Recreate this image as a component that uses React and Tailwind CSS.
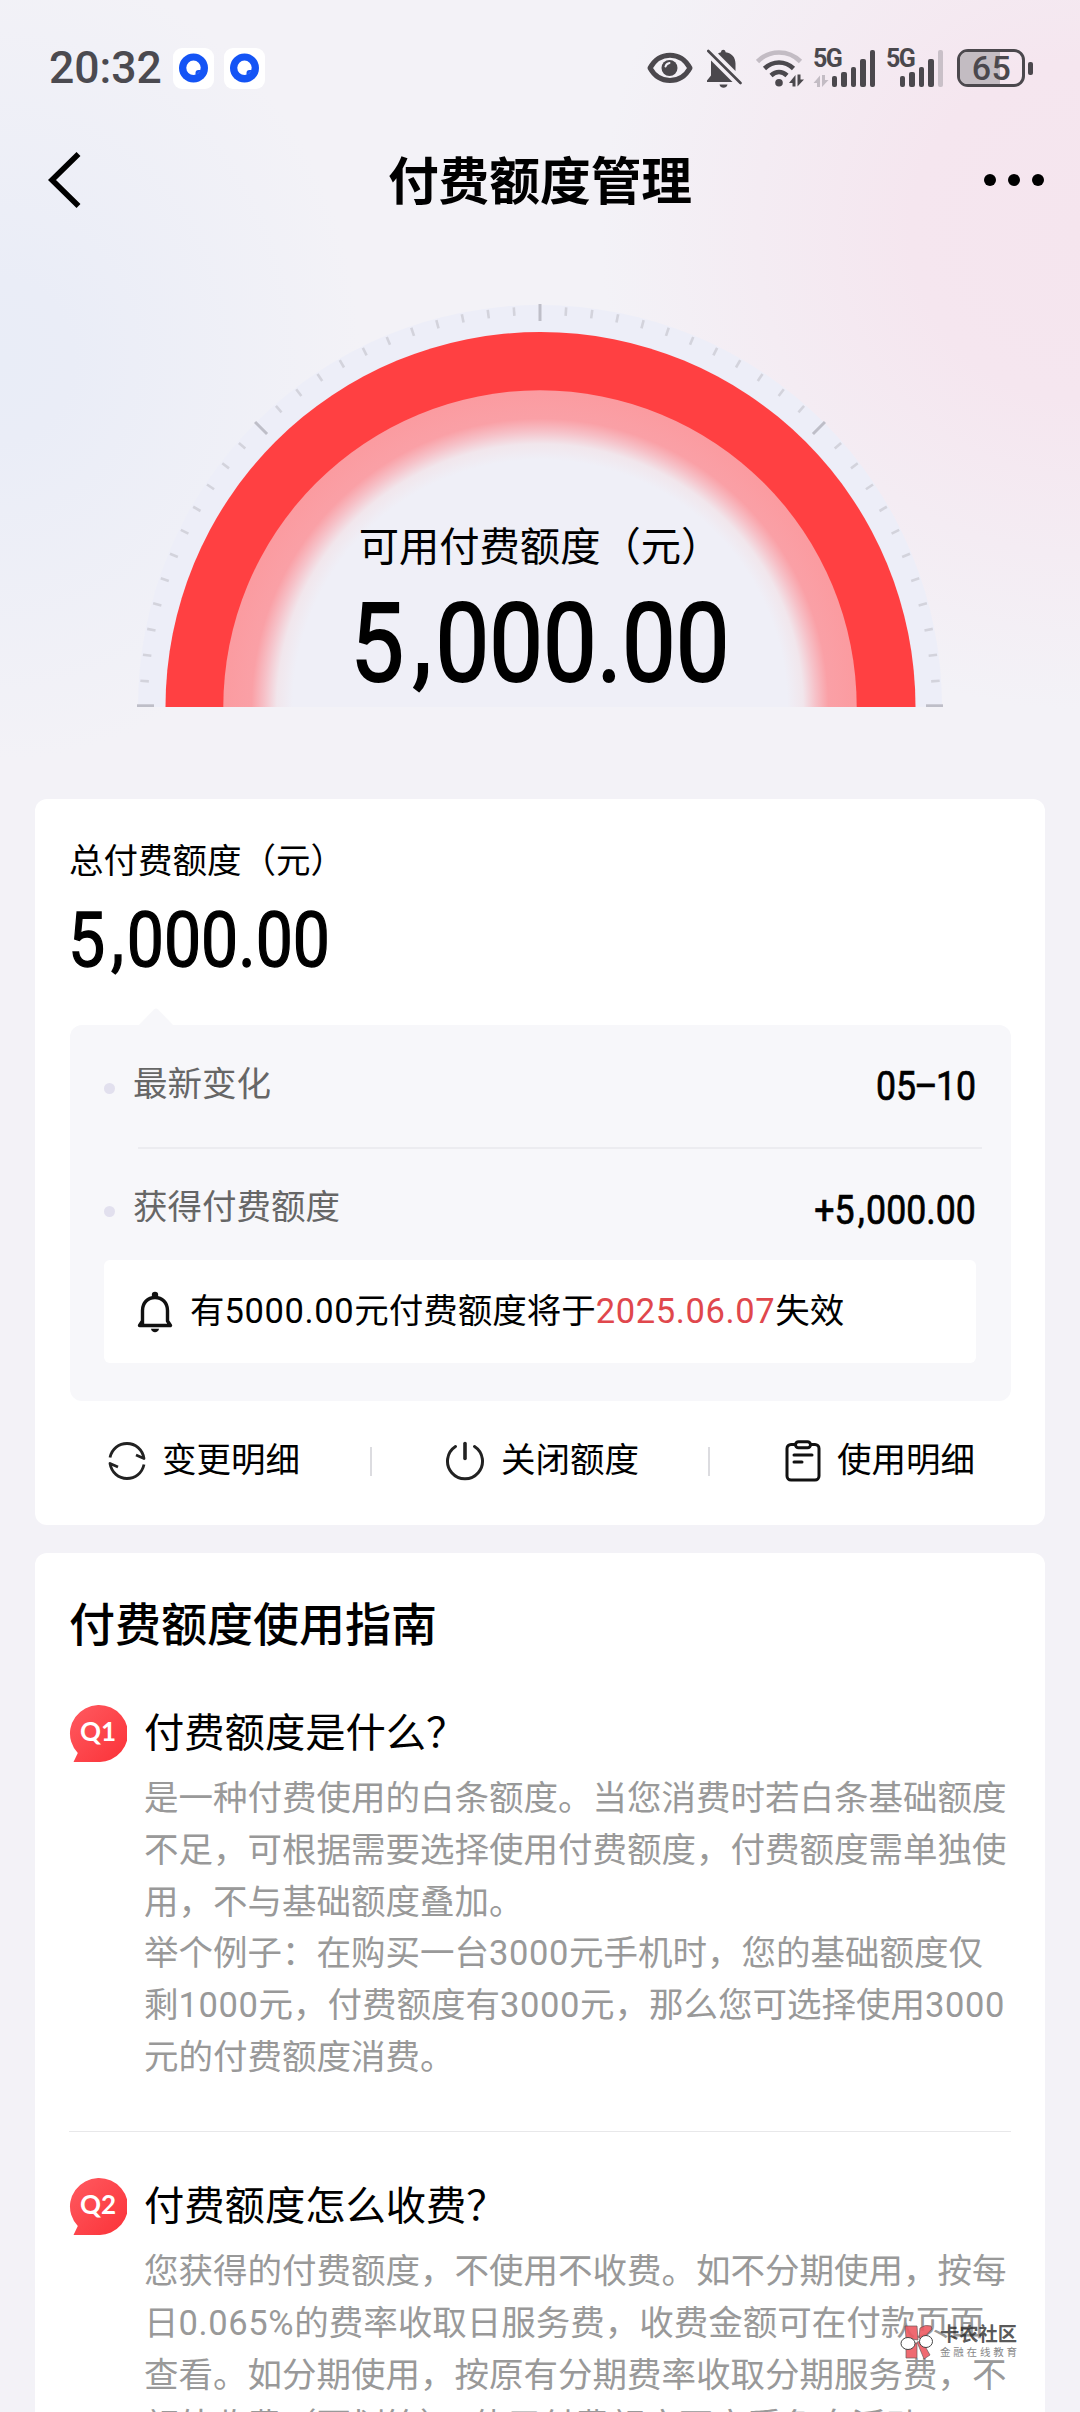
import React from 'react';

const ACTIONS = [
  { label: '变更明细', icon: <SwapIcon /> },
  { label: '关闭额度', icon: <PowerIcon />, divider: 'ml-[70px] mr-[73px]' },
  { label: '使用明细', icon: <ClipboardIcon />, divider: 'ml-[69px] mr-[75px]' },
];

const GUIDE = [
  {
    id: 'Q1',
    title: '付费额度是什么？',
    lines: [
      '是一种付费使用的白条额度。当您消费时若白条基础额度',
      '不足，可根据需要选择使用付费额度，付费额度需单独使',
      '用，不与基础额度叠加。',
      '举个例子：在购买一台3000元手机时，您的基础额度仅',
      '剩1000元，付费额度有3000元，那么您可选择使用3000',
      '元的付费额度消费。',
    ],
  },
  {
    id: 'Q2',
    title: '付费额度怎么收费？',
    lines: [
      '您获得的付费额度，不使用不收费。如不分期使用，按每',
      '日0.065%的费率收取日服务费，收费金额可在付款页面',
      '查看。如分期使用，按原有分期费率收取分期服务费，不',
      '额外收费（更划算）。使用付费额度不享受免息活动',
    ],
  },
];

/* ── Status bar ── */
function AppBadge() {
  return (
    <svg className="w-[41px] h-[41px]" viewBox="0 0 41 41">
      <rect width="41" height="41" rx="9" fill="#fff" />
      <circle cx="20.5" cy="20" r="14.5" fill="#1454f5" />
      <circle cx="20.5" cy="19.8" r="7.2" fill="#fff" />
      <path d="M22.5 28v-3a3 3 0 0 1 3-3h3z" fill="#1454f5" />
    </svg>
  );
}

function EyeIcon() {
  return (
    <svg className="w-[46px] h-[32px]" viewBox="0 0 46 32" fill="none">
      <path d="M3 16C8 7 15 3.200 23 3.200S38 7 43 16c-5 9-12 12.500-20 12.500S8 25 3 16z" stroke="#4b484d" strokeWidth="5" strokeLinejoin="round" />
      <circle cx="22.500" cy="16" r="8" fill="#4b484d" />
      <path d="M18.500 14.500a5 5 0 0 1 4-3.500" stroke="#f2f1f7" strokeWidth="2" strokeLinecap="round" />
    </svg>
  );
}

function BellOffIcon() {
  return (
    <svg className="w-[36px] h-[40px]" viewBox="0 0 36 40" fill="#4b484d">
      <path d="M5 12.500 26.500 34H1v-1.500l4-5z" />
      <path d="M12 5.500c1-.6 2-1 3-1.300.3-3.200 4.200-3.200 4.600 0 6.400 1 9.900 5.300 9.900 11.300v7.500z" />
      <path d="M13.500 36.500h8c-.8 4.300-7.200 4.300-8 0z" />
      <path d="M2.300 3 34.500 35" stroke="#4b484d" strokeWidth="2.600" strokeLinecap="round" />
    </svg>
  );
}

function WifiIcon() {
  return (
    <svg className="w-[48px] h-[38px]" viewBox="0 0 48 38" fill="none" strokeWidth="4.600">
      <path d="M1.500 12.500c12-12 31-12 43 0" stroke="#c3bcc4" />
      <path d="M8.500 19.500c8.500-8 20.500-8 29 0" stroke="#4b484d" />
      <path d="M15 26.500c5-4.500 11-4.500 16 0" stroke="#4b484d" />
      <circle cx="23" cy="33.800" r="3.800" fill="#4b484d" />
      <path d="M39.500 37.500V26L33 34h3.500v3.500zM41.500 25.500v12l6.500-7h-3.500v-5z" fill="#4b484d" />
    </svg>
  );
}

function SignalIcon({ weak }) {
  const heights = [11, 15, 20, 28, 37];
  return (
    <div className="relative w-[62px] h-[38px] flex items-end justify-end gap-[4px]">
      <span className="absolute left-0 -top-[4px] text-[25px] leading-[28px] tracking-[-1.5px] font-bold text-[#4b484d] font-['Roboto',sans-serif]">
        5G
      </span>
      {!weak && (
        <svg className="absolute left-0 bottom-0 w-[16px] h-[12px]" viewBox="0 0 16 12" fill="#c3bcc4">
          <path d="M7 12V.5L.5 8H4v4zM9 0v12l6.500-7H12V0z" />
        </svg>
      )}
      {heights.map((h, i) => (
        <span
          key={i}
          className={`w-[5.500px] rounded-[2px] ${weak && i === 4 ? 'bg-[#c9c0c8]' : 'bg-[#4b484d]'}`}
          style={{ height: h }}
        />
      ))}
    </div>
  );
}

function Battery() {
  return (
    <div className="flex items-center gap-[3px]">
      <div className="relative w-[68px] h-[38px] rounded-[11px] border-[3.500px] border-[#4b484d] flex items-center justify-center">
        <div className="absolute inset-y-0 left-0 w-[65%] rounded-l-[7px] bg-[#c3bcc2]" />
        <span className="relative text-[34px] leading-[31px] tracking-[0.5px] -mr-[1px] font-medium text-[#4b484d] font-['Roboto',sans-serif]">65</span>
      </div>
      <div className="w-[5px] h-[13px] rounded-[2px] bg-[#4b484d]" />
    </div>
  );
}

function StatusBar() {
  return (
    <div className="h-[136px] flex items-center pl-[49px] pr-[47px]">
      <span className="w-[124px] text-[44.500px] leading-none font-medium text-[#4b4a50] font-['Roboto',sans-serif]">20:32</span>
      <div className="flex gap-[10px]">
        <AppBadge />
        <AppBadge />
      </div>
      <div className="ml-auto flex items-center">
        <EyeIcon />
        <div className="ml-[13px]"><BellOffIcon /></div>
        <div className="ml-[14px]"><WifiIcon /></div>
        <div className="ml-[9px]"><SignalIcon /></div>
        <div className="ml-[11px] w-[57px] flex justify-end"><SignalIcon weak /></div>
        <div className="ml-[14px]"><Battery /></div>
      </div>
    </div>
  );
}

/* ── Title bar ── */
function NavBar() {
  return (
    <div className="h-[88px] grid grid-cols-[1fr_auto_1fr] items-center pl-[47px] pr-[47px]">
      <svg className="w-[72px] h-[56px]" viewBox="0 0 72 56" fill="none">
        <path d="M31.500 2 5 28l26.500 26" stroke="#000" strokeWidth="5.600" />
      </svg>
      <h1 className="text-[50.700px] leading-[60px] font-bold text-black pt-[5px]">付费额度管理</h1>
      <div className="justify-self-end -mr-[11px] flex gap-[12px]">
        <span className="w-[12px] h-[12px] rounded-full bg-black" />
        <span className="w-[12px] h-[12px] rounded-full bg-black" />
        <span className="w-[12px] h-[12px] rounded-full bg-black" />
      </div>
    </div>
  );
}

// The comma gets a wider slot and sits higher, the dash a tighter one
const GLYPH_CLASS = {
  ',': 'relative -top-[0.045em] pl-[0.090em] pr-[0.040em]',
  '–': '-mx-[0.050em]',
};

// Narrow digits for every amount
function Amount({ value, className = '' }) {
  return (
    <span className={`inline-block whitespace-nowrap scale-x-[0.870] font-['Roboto',sans-serif] [-webkit-text-stroke:0.018em_black] ${className}`}>
      {value.split('').map((c, i) => (
        <span key={i} className={GLYPH_CLASS[c]}>{c}</span>
      ))}
    </span>
  );
}

// Latin digits inside Chinese copy are set slightly looser
function Copy({ text }) {
  return text.split(/([0-9.%]+)/).map((part, i) =>
    i % 2 ? <span key={i} className="tracking-[0.018em]">{part}</span> : part
  );
}

/* ── Gauge ── */
function Gauge() {
  const ticks = Array.from({ length: 49 }, (_, i) => i);
  return (
    <div className="relative h-[483px]">
      <svg className="w-[1080px] h-[483px]" viewBox="0 0 1080 483">
        <defs>
          <radialGradient id="glow" gradientUnits="userSpaceOnUse" cx="540" cy="483" r="317">
            <stop offset="0.780" stopColor="#efeff7" />
            <stop offset="0.830" stopColor="#f1e6ec" />
            <stop offset="0.870" stopColor="#f6c1c8" />
            <stop offset="0.910" stopColor="#faa0a6" />
            <stop offset="1" stopColor="#fb9ba0" />
          </radialGradient>
        </defs>
        <circle cx="540" cy="483" r="402" fill="#edeef8" />
        {ticks.map(i => {
          const major = i % 12 === 0;
          return (
            <line
              key={i}
              x1={major ? 137 : 139.500}
              x2={major ? 154 : 148}
              y1={i === 48 ? 484.200 : i === 0 ? 481.800 : 483}
              y2={i === 48 ? 484.200 : i === 0 ? 481.800 : 483}
              stroke={major ? '#bebec8' : '#d3d3dc'}
              strokeWidth={major ? 3 : 2.600}
              transform={`rotate(${i * 3.75} 540 483)`}
            />
          );
        })}
        <circle cx="540.500" cy="483" r="375" fill="#ff4042" />
        <circle cx="540" cy="483" r="316.700" fill="url(#glow)" />
      </svg>
      <div className="absolute inset-x-0 top-[298px] flex flex-col items-center">
        <span className="text-[40.300px] leading-[52px] text-black">可用付费额度（元）</span>
        <Amount value="5,000.00" className="text-[110px] leading-[120px] mt-[10px]" />
      </div>
    </div>
  );
}

/* ── Icons of the quota card ── */
function BellIcon() {
  return (
    <svg className="w-[36px] h-[42px]" viewBox="0 0 36 42" fill="none" stroke="#111" strokeWidth="3.400">
      <path d="M5.500 34V19.500C5.500 11.500 11 6.500 18 6.500s12.500 5 12.500 13V30l3 4.500H2.500l3-4.500" strokeLinejoin="round" />
      <circle cx="18" cy="4" r="3.200" fill="#111" stroke="none" />
      <path d="M14 37.800h8c-.5 4.500-7.500 4.500-8 0z" fill="#111" stroke="none" />
    </svg>
  );
}

function SwapIcon() {
  return (
    <svg className="w-[38px] h-[40px]" viewBox="0 0 38 40" fill="none" stroke="#222" strokeWidth="2.800">
      <path d="M2 16.500C4 7.500 11 2.500 19 2.500c8.500 0 15.500 6 17 15l-8-3.500" strokeLinejoin="round" />
      <path d="M36 23.500c-2 9-9 14-17 14-8.500 0-15.500-6-17-15l8 3.500" strokeLinejoin="round" />
    </svg>
  );
}

function PowerIcon() {
  return (
    <svg className="w-[40px] h-[40px]" viewBox="0 0 40 40" fill="none" stroke="#222" strokeWidth="3" strokeLinecap="round">
      <path d="M20 2.500v15" strokeWidth="3.600" />
      <path d="M10.500 5.500a17.500 17.500 0 1 0 19 0" />
    </svg>
  );
}

function ClipboardIcon() {
  return (
    <svg className="w-[36px] h-[42px]" viewBox="0 0 36 42" fill="none" stroke="#111" strokeWidth="3" strokeLinecap="round">
      <path d="M10 4.500H6a4 4 0 0 0-4 4V36a4 4 0 0 0 4 4h24a4 4 0 0 0 4-4V8.500a4 4 0 0 0-4-4h-4" />
      <rect x="10.500" y="1.800" width="15" height="6" rx="3" />
      <path d="M9 15h18M9 22h8" />
    </svg>
  );
}

function Row({ label, value, className }) {
  return (
    <div className={`flex items-center ${className}`}>
      <span className="w-[11px] h-[11px] rounded-full bg-[#e2e0ee] mt-[4px]" />
      <span className="ml-[18px] text-[#666] -mt-[3px]">{label}</span>
      <Amount value={value} className="ml-auto origin-right text-[41px] leading-[48px] text-black" />
    </div>
  );
}

function QuotaCard() {
  return (
    <section className="bg-white rounded-[12px] pl-[35px] pr-[34px] pt-[36px] h-[726px] text-[34.500px]">
      <div className="leading-[52px] text-black -ml-[1px]">总付费额度（元）</div>
      <div className="mt-[23px] h-[60px] leading-[60px] -ml-[2px]">
        <Amount value="5,000.00" className="origin-left text-[76px]" />
      </div>

      <div className="relative mt-[55px] h-[376px] rounded-[12px] bg-[#f7f7fa] pl-[34px] pr-[35px]">
        <svg className="absolute left-[68px] -top-[17px] w-[36px] h-[18px]" viewBox="0 0 36 18">
          <path d="M0 18 16 1.500q2-2 4 0L36 18z" fill="#f7f7fa" />
        </svg>
        <Row label="最新变化" value="05–10" className="h-[122px]" />
        <div className="h-[2px] ml-[34px] -mr-[6px] bg-[#ececf0]" />
        <Row label="获得付费额度" value="+5,000.00" className="h-[111px] pt-[10px]" />
        <div className="h-[103px] rounded-[6px] bg-white flex items-center pl-[33px]">
          <BellIcon />
          <span className="ml-[17px] text-black">
            <Copy text="有5000.00元付费额度将于" />
            <span className="text-[#e0474c]"><Copy text="2025.06.07" /></span>
            失效
          </span>
        </div>
      </div>

      <div className="h-[124px] pb-[4px] pl-[38px] flex items-center whitespace-nowrap">
        {ACTIONS.map(a => (
          <React.Fragment key={a.label}>
            {a.divider && <span className={`w-[2px] h-[29px] bg-[#dcdce0] ${a.divider}`} />}
            <div className="flex items-center gap-[16px]">
              {a.icon}
              <span className="text-black -mt-[1px]">{a.label}</span>
            </div>
          </React.Fragment>
        ))}
      </div>
    </section>
  );
}

/* ── Guide ── */
function QBadge({ id }) {
  return (
    <div className="relative w-[58px] h-[57px]">
      <svg className="absolute inset-0 w-[58px] h-[57px]" viewBox="0 0 58 57">
        <defs>
          <linearGradient id={`q-${id}`} x1="0" y1="0" x2="1" y2="1">
            <stop offset="0" stopColor="#ff5a60" />
            <stop offset="1" stopColor="#fb3238" />
          </linearGradient>
        </defs>
        <path d="M29 57H4.500L8.800 48A29 28.500 0 1 1 29 57z" fill={`url(#q-${id})`} />
      </svg>
      <span className="relative block text-center text-[26px] leading-[53px] font-bold text-white font-['Lato',sans-serif]">{id}</span>
    </div>
  );
}

function GuideItem({ item }) {
  return (
    <div className="flex h-[473px]">
      <QBadge id={item.id} />
      <div className="ml-[17px] whitespace-nowrap">
        <h3 className="text-[40.300px] leading-[58px] text-black">{item.title}</h3>
        <div className="mt-[10px] text-[34.500px] leading-[51.800px] text-[#999]">
          {item.lines.map(line => (
            <p key={line}><Copy text={line} /></p>
          ))}
        </div>
      </div>
    </div>
  );
}

function GuideCard() {
  return (
    <section className="mt-[28px] bg-white rounded-t-[12px] px-[34px] pt-[42px] h-[1000px]">
      <h2 className="text-[46px] leading-[60px] font-medium text-black">付费额度使用指南</h2>
      <div className="mt-[50px]">
        {GUIDE.map((item, i) => (
          <div key={item.id}>
            {i > 0 && <div className="h-px -mt-[47px] mb-[46px] bg-[#e8e8ea]" />}
            <GuideItem item={item} />
          </div>
        ))}
      </div>
    </section>
  );
}

// Community mark laid over the bottom right corner
function Watermark() {
  return (
    <div className="absolute left-[900px] top-[2324px] flex items-center gap-[6px]">
      <svg className="w-[34px] h-[36px]" viewBox="0 0 34 36">
        <g fill="#ee5a62" stroke="#5a4a4c" strokeWidth="0.700" opacity="0.900">
          <path d="M5 2h12l1 14L6 14z" />
          <path d="M19 14 20 4q5-4 11-2l1 3-9 10z" />
          <path d="M6 19h11v15H6z" />
          <path d="M17 18l5-1 8 14-6 4z" />
        </g>
        <ellipse cx="8" cy="19.500" rx="7" ry="6" fill="#fff" stroke="#444" strokeWidth="1" />
        <ellipse cx="26" cy="17.500" rx="6.500" ry="6" fill="#fff" stroke="#444" strokeWidth="1" />
      </svg>
      <div className="whitespace-nowrap">
        <div className="text-[19.300px] leading-[21px] font-bold text-[#222]/75">卡农社区</div>
        <div className="text-[10.500px] leading-[15px] tracking-[2.800px] text-[#888]">金融在线教育</div>
      </div>
    </div>
  );
}

export default function App() {
  return (
    <div className="relative w-[1080px] h-[2412px] overflow-hidden bg-[#f3f2f7] bg-[radial-gradient(ellipse_360px_400px_at_0px_360px,#e9edf7_0%,#eaedf7_20%,rgba(233,237,247,0)_100%),radial-gradient(ellipse_480px_480px_at_1080px_230px,#f5e5ee_0%,#f5e6ef_35%,rgba(245,230,239,0)_100%)] font-['Roboto','Noto_Sans_CJK_SC',sans-serif]">
      <StatusBar />
      <NavBar />
      <Gauge />
      <main className="mt-[92px] px-[35px]">
        <QuotaCard />
        <GuideCard />
      </main>
      <Watermark />
    </div>
  );
}
